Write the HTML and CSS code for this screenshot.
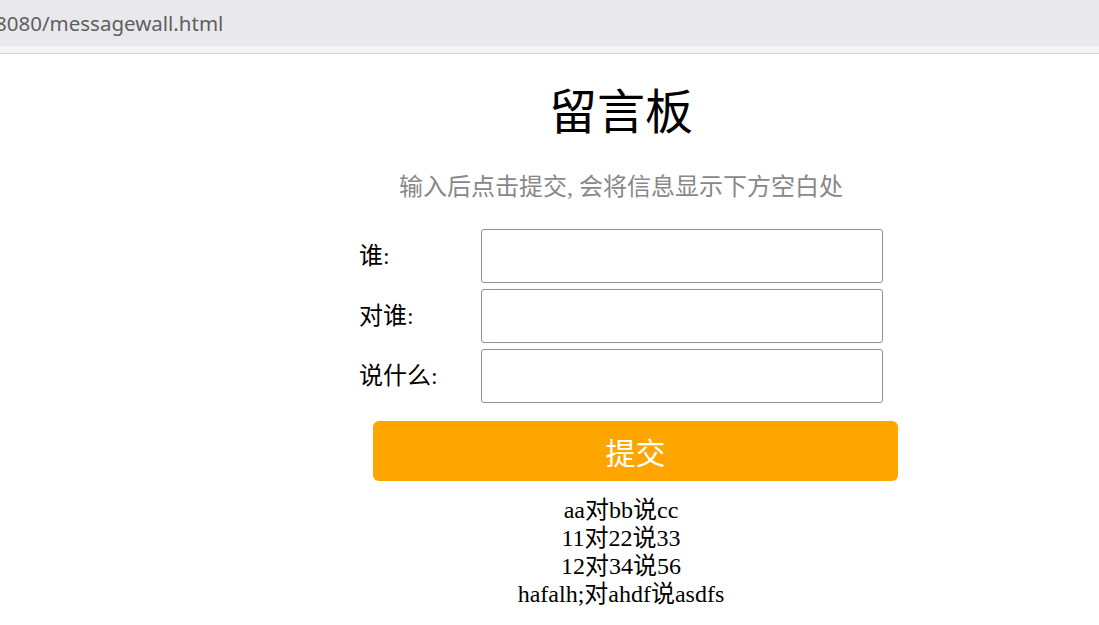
FILE: index.html
```html
<!DOCTYPE html>
<html lang="zh-CN">
<head>
<meta charset="utf-8">
<title>留言板</title>
<link rel="stylesheet" href="styles.css">
</head>
<body>
<header class="browser-bar">
  <div class="url">8080/messagewall.html</div>
</header>
<div class="browser-strip"></div>
<main class="page">
  <h1 class="title">留言板</h1>
  <p class="subtitle">输入后点击提交, 会将信息显示下方空白处</p>
  <form class="form">
    <div class="row"><label class="label">谁:</label><input class="field" type="text"></div>
    <div class="row"><label class="label">对谁:</label><input class="field" type="text"></div>
    <div class="row"><label class="label">说什么:</label><input class="field" type="text"></div>
    <button class="submit" type="button">提交</button>
  </form>
  <div class="messages">
    <div>aa对bb说cc</div>
    <div>11对22说33</div>
    <div>12对34说56</div>
    <div>hafalh;对ahdf说asdfs</div>
  </div>
</main>
</body>
</html>
```
FILE: styles.css
```css
html, body {
  margin: 0;
  padding: 0;
  background: #ffffff;
}
body {
  font-family: "Liberation Serif", "Noto Sans CJK SC", serif;
  color: #000;
}
.browser-bar {
  height: 46px;
  background: #e9e9eb;
  overflow: hidden;
  display: flex;
  align-items: center;
}
.url {
  font-family: "Noto Sans", "Open Sans", sans-serif;
  font-size: 20.5px;
  color: #5f5f63;
  text-indent: -5px;
  white-space: nowrap;
  margin-top: 0;
}
.browser-strip {
  height: 7px;
  background: #f4f4f6;
  border-bottom: 1px solid #d2d2d4;
}
.page {
  width: 524px;
  margin-left: 359px;
  padding-top: 29px;
}
.title {
  margin: 0;
  font-size: 48px;
  font-weight: normal;
  line-height: 60px;
  text-align: center;
}
.subtitle {
  margin: 29px 0 0;
  font-size: 24px;
  line-height: 30px;
  color: #888888;
  text-align: center;
}
.form {
  margin-top: 27px;
  display: flex;
  flex-direction: column;
}
.row {
  display: flex;
  align-items: center;
  height: 54px;
  margin-bottom: 6px;
}
.label {
  width: 122px;
  font-size: 24px;
  margin-bottom: 5px;
}
.field {
  width: 402px;
  height: 54px;
  box-sizing: border-box;
  border: 1px solid #8f8f9d;
  border-radius: 3px;
  padding: 0 8px;
  font-size: 20px;
  background: #fff;
  outline: none;
}
.submit {
  margin-top: 12px;
  margin-left: 14px;
  width: 525px;
  height: 60px;
  border: none;
  border-radius: 6px;
  background: #ffa500;
  color: #ffffff;
  font-family: "Noto Sans CJK SC", sans-serif;
  font-size: 30px;
  cursor: pointer;
}
.messages {
  margin-top: 15px;
  font-size: 24px;
  line-height: 28px;
  text-align: center;
}
```
